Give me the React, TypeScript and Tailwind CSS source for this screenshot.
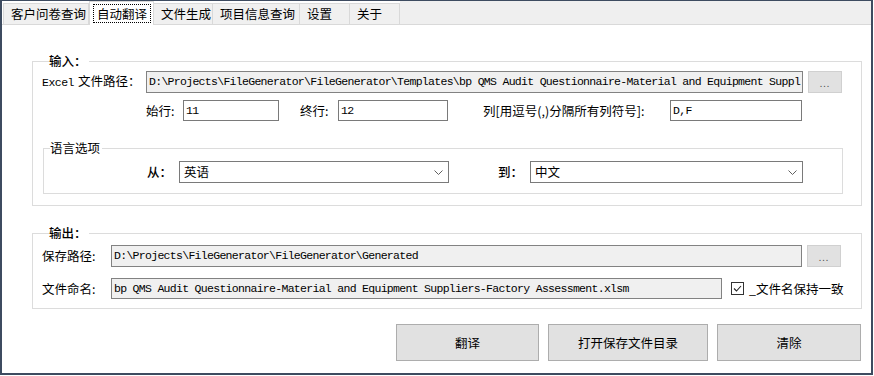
import React from "react";

const mono = "font-['Liberation_Mono',monospace] text-[11.5px] tracking-[-0.7px]";

const tabs = [
  { label: "客户问卷查询", w: "w-[86px]" },
  { label: "自动翻译", w: "w-[65px]", active: true },
  { label: "文件生成", w: "w-[59px]" },
  { label: "项目信息查询", w: "w-[87px]" },
  { label: "设置", w: "w-[50px]" },
  { label: "关于", w: "w-[50px]" },
];

function TextBox({
  value,
  className,
  readOnly = false,
}: {
  value: string;
  className: string;
  readOnly?: boolean;
}) {
  return (
    <div
      className={`${className} flex shrink-0 items-center overflow-hidden whitespace-nowrap border pl-[2px] ${
        readOnly ? "border-[#828282] bg-[#f0f0f0]" : "border-[#7a7a7a] bg-white"
      }`}
    >
      <span className={mono}>{value}</span>
    </div>
  );
}

function DotsButton() {
  return (
    <button
      type="button"
      className="ml-[5px] flex h-[22px] w-[34px] shrink-0 items-center justify-center border border-[#d0d0d0] bg-[#e1e1e1] pt-[3px] text-[9px] tracking-[1px] text-[#555]"
    >
      ...
    </button>
  );
}

function Combo({ value, className }: { value: string; className: string }) {
  return (
    <div
      className={`${className} flex h-[22px] shrink-0 items-center justify-between border border-[#7a7a7a] bg-white pl-[4px] pr-[5px]`}
    >
      <span>{value}</span>
      <svg width="9" height="5" viewBox="0 0 9 5" fill="none">
        <path d="M0.5 0.5 L4.5 4.5 L8.5 0.5" stroke="#606060" strokeWidth="1" />
      </svg>
    </div>
  );
}

function Button({ label, className }: { label: string; className: string }) {
  return (
    <button
      type="button"
      className={`${className} flex h-[37px] items-center justify-center border border-[#adadad] bg-[#e1e1e1] text-[12.5px]`}
    >
      {label}
    </button>
  );
}

export default function App() {
  return (
    <div className="h-[376px] w-[874px] bg-white font-['Noto_Sans_CJK_SC',sans-serif] text-[12.5px] leading-[16px] text-black">
      <div className="flex h-[375px] w-[873px] flex-col border-x-2 border-b-2 border-t border-[#3d4b60]">
        {/* tab strip */}
        <div className="flex h-[24px] items-end border-b border-[#d9d9d9] bg-white pl-[1px]">
          {tabs.map((t) =>
            t.active ? (
              <div
                key={t.label}
                className={`${t.w} relative z-10 -mb-px flex h-[24px] items-center border border-b-0 border-[#d9d9d9] bg-white pl-[3px]`}
              >
                <span className="border border-dotted border-black px-[3px] py-px leading-[15px]">
                  {t.label}
                </span>
              </div>
            ) : (
              <div
                key={t.label}
                className={`${t.w} flex h-[21px] items-center border border-b-0 border-l-0 border-[#d9d9d9] bg-[#f0f0f0] pl-[7px] first:border-l`}
              >
                {t.label}
              </div>
            )
          )}
          <div className="h-[23px] flex-1 bg-[#efefef]" />
        </div>

        <div className="flex flex-1 flex-col pl-[30px] pr-[9px]">
          {/* input group */}
          <fieldset className="mt-[28px] border border-[#dcdcdc] pb-[11px] pl-[9px] pt-[2px]">
            <legend className="ml-[7px] pr-[2px] font-medium">输入：</legend>
            <div className="flex h-[22px] items-center">
              <div className="w-[104px] shrink-0 whitespace-nowrap">
                <span className="font-['Liberation_Mono',monospace] text-[11.5px] tracking-[-0.5px]">Excel</span>
                <span className="ml-[4px]">文件路径：</span>
              </div>
              <TextBox
                readOnly
                className="h-[22px] w-[657px]"
                value="D:\Projects\FileGenerator\FileGenerator\Templates\bp QMS Audit Questionnaire-Material and Equipment Suppl"
              />
              <DotsButton />
            </div>
            <div className="ml-[104px] mt-[7px] flex h-[21px] items-center">
              <span className="w-[37px]">始行:</span>
              <TextBox className="h-[21px] w-[96px]" value="11" />
              <span className="ml-[21px] w-[38px]">终行:</span>
              <TextBox className="h-[21px] w-[110px]" value="12" />
              <span className="ml-[35px] w-[187px] whitespace-nowrap">列[用逗号(,)分隔所有列符号]:</span>
              <TextBox className="h-[21px] w-[132px]" value="D,F" />
            </div>
            <fieldset className="ml-[1px] mt-[19px] w-[800px] border border-[#dcdcdc] pb-[10px] pt-[5px]">
              <legend className="ml-[6px] pr-[2px]">语言选项</legend>
              <div className="ml-[103px] flex items-center">
                <span className="w-[32px] font-medium">从：</span>
                <Combo className="w-[270px]" value="英语" />
                <span className="ml-[49px] w-[32px] font-medium">到：</span>
                <Combo className="w-[273px]" value="中文" />
              </div>
            </fieldset>
          </fieldset>

          {/* output group */}
          <fieldset className="mt-[19px] border border-[#dcdcdc] pb-[9px] pl-[9px] pt-[4px]">
            <legend className="ml-[7px] pr-[2px] font-medium">输出：</legend>
            <div className="flex h-[22px] items-center">
              <span className="w-[69px] shrink-0">保存路径:</span>
              <TextBox
                readOnly
                className="h-[22px] w-[691px]"
                value="D:\Projects\FileGenerator\FileGenerator\Generated"
              />
              <DotsButton />
            </div>
            <div className="mt-[11px] flex h-[21px] items-center">
              <span className="w-[69px] shrink-0">文件命名:</span>
              <TextBox
                readOnly
                className="h-[21px] w-[611px]"
                value="bp QMS Audit Questionnaire-Material and Equipment Suppliers-Factory Assessment.xlsm"
              />
              <div className="ml-[9px] flex h-[13px] w-[13px] shrink-0 items-center justify-center border border-[#333] bg-white">
                <svg width="11" height="11" viewBox="0 0 11 11" fill="none">
                  <path d="M2 5.5 L4.5 8 L9 3" stroke="#222" strokeWidth="1.1" />
                </svg>
              </div>
              <span className="ml-[5px] whitespace-nowrap">_文件名保持一致</span>
            </div>
          </fieldset>

          {/* action buttons */}
          <div className="mt-[15px] flex justify-end gap-[9px] pr-[1px]">
            <Button label="翻译" className="w-[143px]" />
            <Button label="打开保存文件目录" className="w-[160px]" />
            <Button label="清除" className="w-[144px]" />
          </div>
        </div>
      </div>
    </div>
  );
}
